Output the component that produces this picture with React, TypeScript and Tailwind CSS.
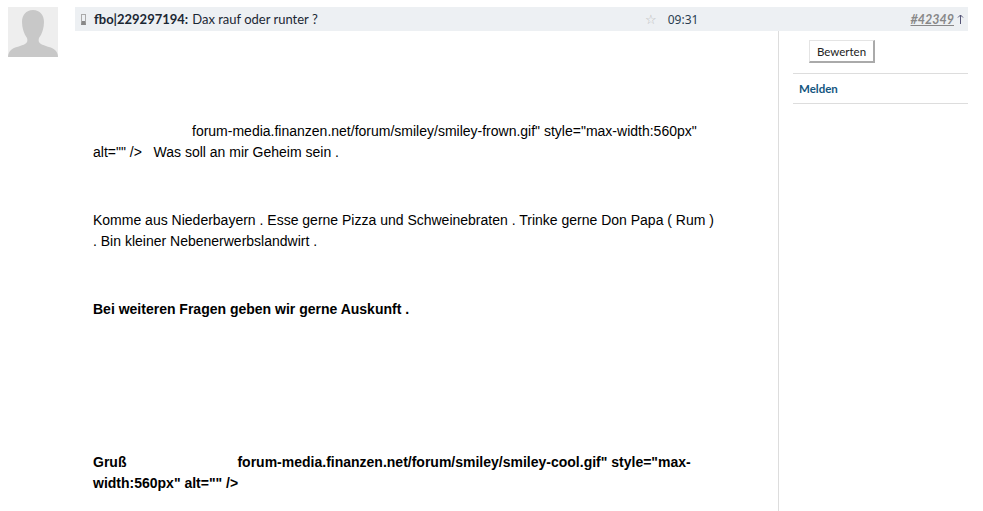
const headFont = { fontFamily: 'Lato, sans-serif' };

function Avatar() {
  return (
    <svg width="50" height="50" viewBox="0 0 50 50" className="block shrink-0">
      <rect width="50" height="50" fill="#eeeeee" />
      <path
        d="M25 3c-7 0-11 5-11 12 0 6 2 12 5 16 1 3 0 5-2 6-3 2-11 3-14 6-2 2-3 4-3 7h50c0-3-1-5-3-7-3-3-11-4-14-6-2-1-3-3-2-6 3-4 5-10 5-16 0-7-4-12-11-12z"
        fill="#c8c8c8"
      />
    </svg>
  );
}

export default function App() {
  return (
    <div className="flex h-[511px] overflow-hidden bg-white pl-2 pt-[7px] pr-[15px] text-[14px] leading-[21px] text-black font-['Liberation_Sans',sans-serif]">
      <Avatar />
      <div className="ml-[17px] flex min-w-0 flex-1 flex-col">
        {/* Post header */}
        <div className="flex h-6 items-center bg-[#edf0f3] text-[#1b2733]">
          <span className="ml-[6px] h-[11px] w-[5px] border border-[#aaaaaa] border-b-[4px] border-b-[#888888]" />
          <span className="ml-2 text-[13px] font-bold" style={headFont}>fbo|229297194:</span>
          <span className="ml-1 text-[13px]" style={headFont}>Dax rauf oder runter ?</span>
          <span className="ml-[327px] text-[13px] leading-none text-[#bbbbbb]">☆</span>
          <span className="ml-[11px] text-[12px] text-[#2a3d50]" style={{ fontFamily: '"Noto Sans", sans-serif' }}>09:31</span>
          <span className="ml-auto text-[12.5px] font-bold italic text-[#888888] underline" style={headFont}>#42349</span>
          <svg width="7" height="10" viewBox="0 0 7 10" className="ml-[3px] mr-[4px]" fill="none" stroke="#555577" strokeWidth="1">
            <path d="M3.5 10V1M1 3.5 3.5 1 6 3.5" />
          </svg>
        </div>

        <div className="flex min-h-0 flex-1">
          {/* Post body */}
          <div className="w-[703px] shrink-0 pl-[18px] pr-[60px]">
            <p className="mt-[90px]">
              <span className="inline-block w-[99px]" />
              forum-media.finanzen.net/forum/smiley/smiley-frown.gif" style="max-width:560px" alt="" /&gt;&nbsp;&nbsp; Was soll an mir Geheim sein .
            </p>
            <p className="mt-[47px]">
              Komme aus Niederbayern . Esse gerne Pizza und Schweinebraten . Trinke gerne Don Papa ( Rum ) . Bin kleiner Nebenerwerbslandwirt .
            </p>
            <p className="mt-[47px] font-bold">Bei weiteren Fragen geben wir gerne Auskunft .</p>
            <p className="mt-[132px] font-bold">
              Gruß
              <span className="inline-block w-[111px]" />
              forum-media.finanzen.net/forum/smiley/smiley-cool.gif" style="max-width:560px" alt="" /&gt;
            </p>
          </div>

          {/* Side column */}
          <div className="flex-1 border-l border-[#dddddd] pl-[14px]">
            <button className="ml-[16px] mt-[9px] block h-[23px] w-[66px] border border-[#e4e4e4] border-r-2 border-b-2 border-r-[#aaaaaa] border-b-[#aaaaaa] bg-white text-[11.5px] text-[#222222]" style={headFont}>
              Bewerten
            </button>
            <div className="mt-[10px] border-y border-[#dddddd] py-[4px] pl-[6px] text-[11.5px] font-bold text-[#14567f]" style={headFont}>
              Melden
            </div>
          </div>
        </div>
      </div>
    </div>
  );
}
